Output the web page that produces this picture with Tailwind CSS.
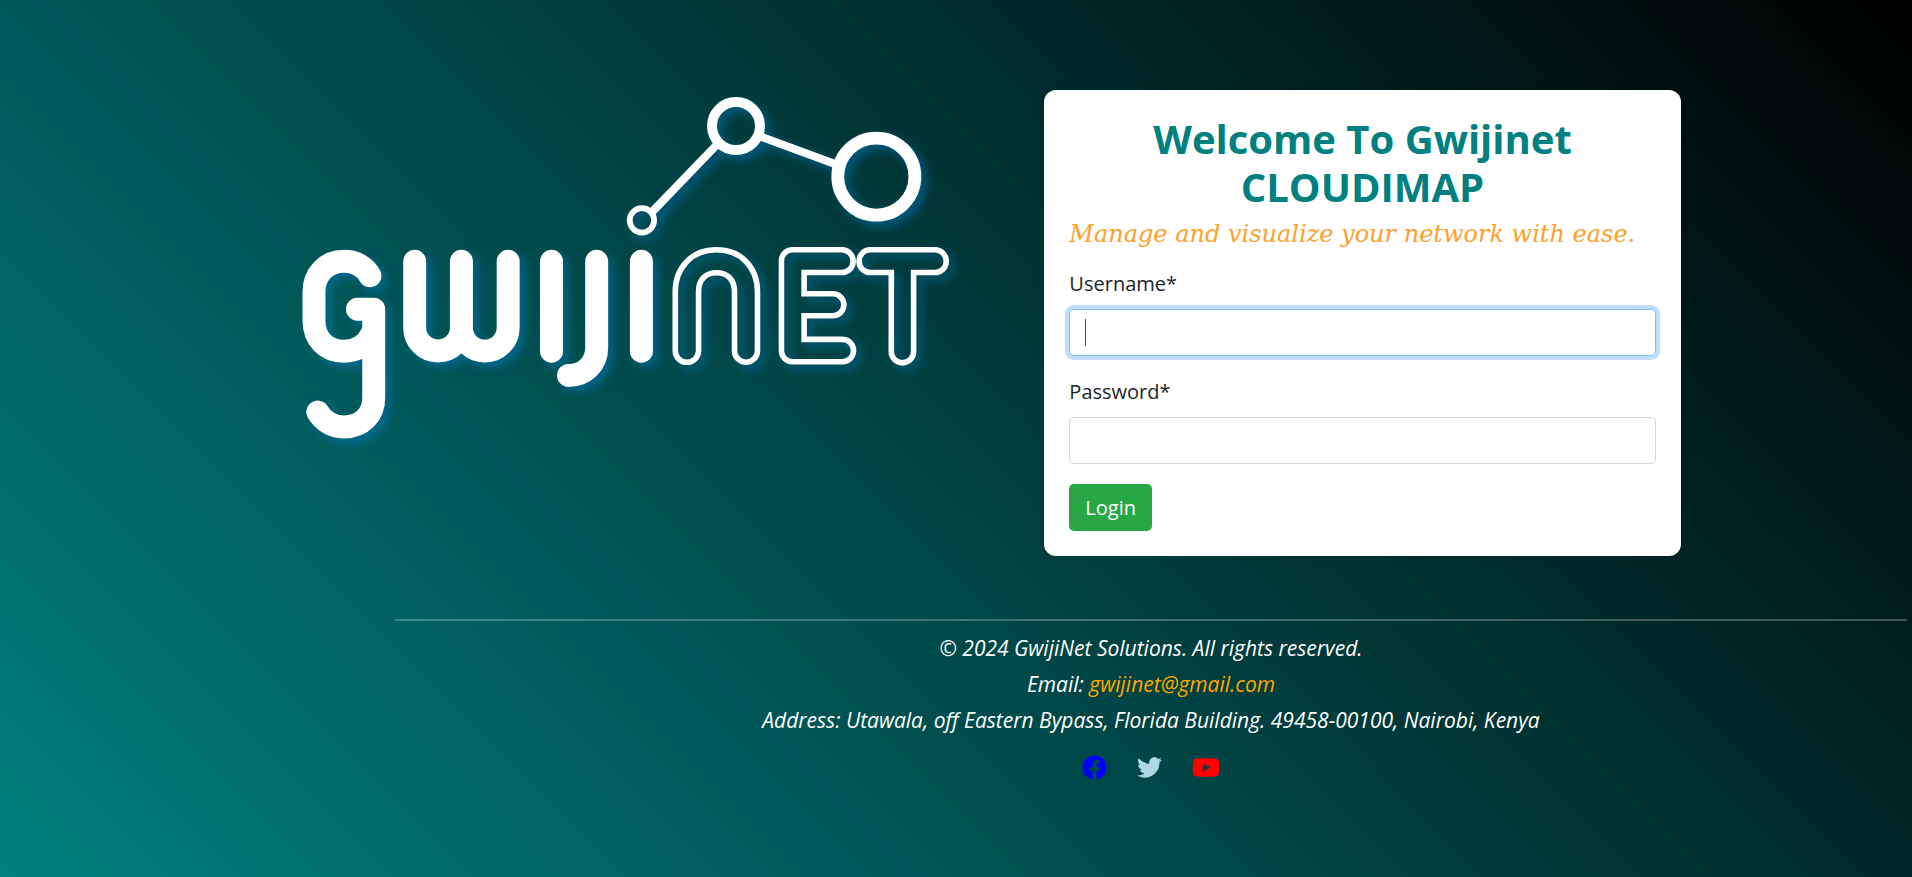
<!DOCTYPE html>
<html lang="en">
<head>
<meta charset="utf-8">
<meta name="viewport" content="width=device-width, initial-scale=1">
<title>Gwijinet CLOUDIMAP</title>
<script src="https://cdn.jsdelivr.net/npm/@tailwindcss/browser@4"></script>
</head>
<body class="min-h-screen bg-[linear-gradient(45deg,#008080,#000000)] font-['Open_Sans',sans-serif] text-xl leading-[30px] text-[#212529]">
  <main class="grid grid-cols-[650fr_637fr] items-start gap-[93px] pt-[90px] pr-[12.1%] pl-[15.8%]">
    <svg class="w-full overflow-visible drop-shadow-[5px_5px_5px_rgba(0,123,200,0.5)]" viewBox="301 90 650 350" fill="none" stroke="#fff" stroke-linecap="round" stroke-linejoin="round" role="img" aria-label="Gwijinet">
      <g stroke-width="23">
        <path d="M369 276C364 267 355 261.5 343 261.5C325 261.5 313 275 313 292V321C313 339 325 351.5 343 351.5C356 351.5 366 345 371 334"/>
        <path d="M356.5 309.5H372.8V398C372.8 415 361 427.3 343 427.3C331 427.3 322 421 316.8 412.5"/>
        <path d="M413.8 261.5V328a23.4 23.4 0 0 0 46.8 0V261.5M460.6 328a23.4 23.4 0 0 0 46.8 0V261.5"/>
        <path d="M550.8 261.5V351.5"/>
        <path d="M596 261.5V348C596 364 584 375.8 567.8 375.8"/>
        <path d="M640.8 261.5V351.5"/>
      </g>
      <g stroke-width="5.6" stroke-linejoin="miter">
        <path d="M674.7 351V292C674.7 267 692 250 716 250S757 267 757 292V351a11.5 11.5 0 0 1-23 0V292C734 280 727 273 716 273S698 280 698 292V351a11.65 11.65 0 0 1-23.3 0z"/>
        <path d="M792 250H841.5a11.3 11.35 0 0 1 0 22.7H803.7V294H832.5a11 11 0 0 1 0 22H803.7V339.7H842a11.2 11.2 0 0 1 0 22.4H792a11 11 0 0 1-11-11V261a11 11 0 0 1 11-11z"/>
        <path d="M870 250H934.7a11.3 11.35 0 0 1 0 22.7H913.3V352a11.15 11.15 0 0 1-22.3 0V272.7H870a11.3 11.35 0 0 1 0-22.7z"/>
      </g>
      <circle cx="641.3" cy="220.5" r="12.2" stroke-width="5.8"/>
      <circle cx="735.5" cy="126" r="24" stroke-width="10"/>
      <circle cx="876" cy="176.7" r="38.6" stroke-width="12.8"/>
      <path stroke-width="8" stroke-linecap="butt" d="M652 211.5L717 144M760 136.6L836 164.5"/>
    </svg>
    <section class="rounded-xl bg-white p-[25px] shadow-[0_0_10px_rgba(0,0,0,0.1)]">
      <h1 class="mb-[10px] text-center text-[40px] leading-[48px] font-bold text-[#008080]">Welcome To Gwijinet CLOUDIMAP</h1>
      <p class="mb-[21px] font-['DejaVu_Serif',serif] text-2xl leading-[27px] whitespace-nowrap text-[#ffa02a] italic">Manage and visualize your network with ease.</p>
      <form>
        <label for="username" class="mb-[10px] block">Username*</label>
        <div class="relative mb-[21px]">
          <input id="username" type="text" autofocus class="block h-[47px] w-full rounded-[5px] border border-[#ced4da] px-[15px] text-[#495057] caret-transparent outline-none focus:border-[#80bdff] focus:shadow-[0_0_0_4px_#bfdeff]">
          <span class="pointer-events-none absolute inset-y-[10px] left-4 w-px bg-[#495057]"></span>
        </div>
        <label for="password" class="mb-[10px] block">Password*</label>
        <input id="password" type="password" class="mb-5 block h-[47px] w-full rounded-[5px] border border-[#ced4da] px-[15px] text-[#495057] outline-none focus:border-[#80bdff] focus:shadow-[0_0_0_4px_#bfdeff]">
        <button type="submit" class="block h-[47px] rounded-[5px] bg-[#28a745] px-4 text-white">Login</button>
      </form>
    </section>
  </main>
  <footer class="mt-[63px] mr-[5px] ml-[395px] border-t-2 border-white/25 pt-3 text-center text-[21px] text-white italic">
    <p class="mb-[6px]">© 2024 GwijiNet Solutions. All rights reserved.</p>
    <p class="mb-[6px]">Email: <a href="mailto:gwijinet@gmail.com" class="text-[#ffa500]">gwijinet@gmail.com</a></p>
    <p>Address: Utawala, off Eastern Bypass, Florida Building. 49458-00100, Nairobi, Kenya</p>
    <nav class="mt-5 flex justify-center gap-[30px]" aria-label="Social media">
      <a href="#facebook" aria-label="Facebook" class="text-[#0000ff]"><svg class="h-[25px] w-[25px]" viewBox="0 0 512 512" fill="currentColor"><path d="M504 256C504 119 393 8 256 8S8 119 8 256c0 123.78 90.69 226.38 209.25 245V327.69h-63V256h63v-54.64c0-62.15 37-96.48 93.67-96.48 27.14 0 55.52 4.84 55.52 4.84v61h-31.28c-30.8 0-40.41 19.12-40.41 38.73V256h68.78l-11 71.69h-57.78V501C413.31 482.38 504 379.78 504 256z"/></svg></a>
      <a href="#twitter" aria-label="Twitter" class="text-[#add8e6]"><svg class="h-[25px] w-[25px]" viewBox="0 0 512 512" fill="currentColor"><path d="M459.37 151.716c.325 4.548.325 9.097.325 13.645 0 138.72-105.583 298.558-298.558 298.558-59.452 0-114.68-17.219-161.137-47.106 8.447.974 16.568 1.299 25.34 1.299 49.055 0 94.213-16.568 130.274-44.832-46.132-.975-84.792-31.188-98.112-72.772 6.498.974 12.995 1.624 19.818 1.624 9.421 0 18.843-1.3 27.614-3.573-48.081-9.747-84.143-51.98-84.143-102.985v-1.299c13.969 7.797 30.214 12.67 47.431 13.319-28.264-18.843-46.781-51.005-46.781-87.391 0-19.492 5.197-37.36 14.294-52.954 51.655 63.675 129.3 105.258 216.365 109.807-1.624-7.797-2.599-15.918-2.599-24.04 0-57.828 46.782-104.934 104.934-104.934 30.213 0 57.502 12.67 76.67 33.137 23.715-4.548 46.456-13.32 66.599-25.34-7.798 24.366-24.366 44.833-46.132 57.827 21.117-2.273 41.584-8.122 60.426-16.243-14.292 20.791-32.161 39.308-52.628 54.253z"/></svg></a>
      <a href="#youtube" aria-label="YouTube" class="text-[#ff0000]"><svg class="h-[25px] w-7" viewBox="0 0 576 512" fill="currentColor"><path d="M549.655 124.083c-6.281-23.65-24.787-42.276-48.284-48.597C458.781 64 288 64 288 64S117.22 64 74.629 75.486c-23.497 6.322-42.003 24.947-48.284 48.597-11.412 42.867-11.412 132.305-11.412 132.305s0 89.438 11.412 132.305c6.281 23.65 24.787 41.5 48.284 47.821C117.22 448 288 448 288 448s170.78 0 213.371-11.486c23.497-6.321 42.003-24.171 48.284-47.821 11.412-42.867 11.412-132.305 11.412-132.305s0-89.438-11.412-132.305zm-317.51 213.508V175.185l142.739 81.205-142.739 81.201z"/></svg></a>
    </nav>
  </footer>
</body>
</html>
